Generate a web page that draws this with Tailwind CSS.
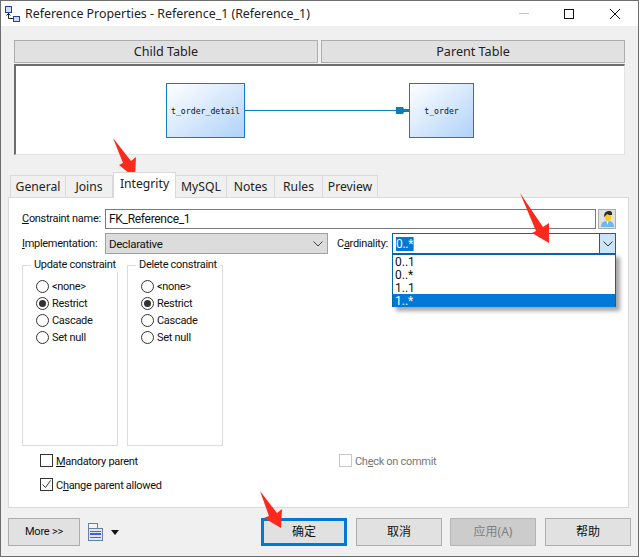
<!DOCTYPE html>
<html lang="en">
<head>
    <meta charset="UTF-8">
    <title>Reference Properties</title>
    <script src="https://cdn.jsdelivr.net/npm/@tailwindcss/browser@4"></script>
</head>
<body class="bg-white overflow-hidden">
<div class="relative w-[639px] h-[558px] bg-white text-[12px] leading-[14px] text-[#111] font-['Noto_Sans','Noto_Sans_CJK_SC',sans-serif]">
    <!-- Dialog window -->
    <div class="w-[639px] h-[557px] border border-[#6e6e6e] bg-[#f0f0f0] flex flex-col">
        <!-- Title bar -->
        <div class="h-[25px] bg-white flex items-center shrink-0">
            <svg class="ml-[3px] w-[17px] h-[17px]" viewBox="0 0 17 17" fill="none">
                <rect x="1.5" y="1.5" width="6" height="6" fill="#cfe0ff" stroke="#1f3fb5"/>
                <rect x="9.5" y="11.5" width="6" height="5" fill="#cfe0ff" stroke="#1f3fb5"/>
                <path d="M4.5 8v5.5H9.5M2.5 10.5l2-2 2 2" stroke="#222"/>
            </svg>
            <span class="ml-[4px] text-[12.4px] text-[#222]">Reference Properties - Reference_1 (Reference_1)</span>
            <div class="ml-auto flex items-center">
                <div class="w-[10px] h-px bg-[#c4c4c4]"></div>
                <div class="ml-[35px] w-[10px] h-[10px] border border-[#111]"></div>
                <svg class="ml-[36px] mr-[18px] w-[10px] h-[10px]" viewBox="0 0 10 10" stroke="#111"><path d="M0 0l10 10M10 0L0 10"/></svg>
            </div>
        </div>

        <!-- Table headers -->
        <div class="mt-[14px] ml-[13px] flex gap-[3px] shrink-0 text-[12.6px]">
            <div class="w-[304px] h-[23px] bg-[#e1e1e1] border border-[#adadad] flex items-center justify-center text-[#222]">Child Table</div>
            <div class="w-[304px] h-[23px] bg-[#e1e1e1] border border-[#adadad] flex items-center justify-center text-[#222]">Parent Table</div>
        </div>

        <!-- Diagram -->
        <div class="relative mt-px ml-[13px] w-[611px] h-[91px] bg-white border-t-2 border-l-2 border-r border-b border-t-[#6d6d6d] border-l-[#6d6d6d] border-r-[#e3e3e3] border-b-[#e3e3e3] shrink-0">
            <div class="absolute left-[150px] top-[17px] w-[79px] h-[55px] border border-[#0f7fbf] bg-linear-to-br from-white to-[#b0d2f8] flex items-center justify-center font-['DejaVu_Sans_Mono',monospace] text-[8.2px] text-[#111]">t_order_detail</div>
            <div class="absolute left-[393px] top-[17px] w-[65px] h-[55px] border border-[#0f7fbf] bg-linear-to-br from-white to-[#b0d2f8] flex items-center justify-center font-['DejaVu_Sans_Mono',monospace] text-[8.2px] text-[#111]">t_order</div>
            <svg class="absolute left-[229px] top-[37px] w-[164px] h-[14px]" viewBox="0 0 164 14" fill="#0a7dbd">
                <rect x="0" y="7" width="164" height="1"/>
                <polygon points="151,4 158,4 159,6 164,6 164,9 159,9 158,11 151,11"/>
            </svg>
        </div>

        <!-- Tabs -->
        <div class="mt-[17px] ml-[9px] h-[26px] flex items-end relative z-10 -mb-px shrink-0 text-[#222] text-[12.2px]">
            <div class="w-[56px] h-[23px] bg-[#f0f0f0] border border-[#d9d9d9] flex items-center justify-center">General</div>
            <div class="w-[47px] h-[23px] bg-[#f0f0f0] border border-l-0 border-[#d9d9d9] flex items-center justify-center">Joins</div>
            <div class="w-[63px] h-[26px] bg-white border border-b-0 border-[#d9d9d9] flex items-center justify-center pb-[3px]">Integrity</div>
            <div class="w-[51px] h-[23px] bg-[#f0f0f0] border border-l-0 border-[#d9d9d9] flex items-center justify-center">MySQL</div>
            <div class="w-[48px] h-[23px] bg-[#f0f0f0] border border-l-0 border-[#d9d9d9] flex items-center justify-center">Notes</div>
            <div class="w-[48px] h-[23px] bg-[#f0f0f0] border border-l-0 border-[#d9d9d9] flex items-center justify-center">Rules</div>
            <div class="w-[55px] h-[23px] bg-[#f0f0f0] border border-l-0 border-[#d9d9d9] flex items-center justify-center">Preview</div>
        </div>

        <!-- Integrity page -->
        <div class="ml-[7px] w-[621px] h-[311px] bg-white border border-[#d9d9d9] pt-[11px] pl-[13px] shrink-0 font-['Roboto',sans-serif] text-[11px] tracking-[-0.3px]">
            <div class="flex items-center h-[20px]">
                <label class="w-[83px] shrink-0 whitespace-nowrap"><u>C</u>onstraint name:</label>
                <div class="w-[491px] h-[20px] border border-[#7a7a7a] pl-[3px] flex items-center text-[12px]">FK_Reference_1</div>
                <div class="ml-[2px] w-[18px] h-[20px] bg-[#e1e1e1] border border-[#adadad] flex items-center justify-center">
                    <svg class="w-[15px] h-[16px]" viewBox="0 0 15 16">
                        <path d="M1 16c0-5 3-6 6.500-6s6.500 1 6.500 6z" fill="#6fb6ec"/>
                        <path d="M6.500 10l1 4 1-4z" fill="#fff"/>
                        <ellipse cx="8" cy="6" rx="3.200" ry="4" fill="#f5cf1f"/>
                        <path d="M4 6c0-4 2-6 5-6s3.500 2 3 4c-2 0-4 0-5-1-1 1-1.500 2-3 3z" fill="#2b2b2b"/>
                    </svg>
                </div>
            </div>
            <div class="mt-[4px] flex items-center h-[21px]">
                <label class="w-[83px] shrink-0 whitespace-nowrap"><u>I</u>mplementation:</label>
                <div class="w-[223px] h-[21px] bg-[#dcdcdc] border border-[#a0a0a0] pl-[3px] pr-[4px] flex items-center justify-between text-[11.5px]">
                    Declarative
                    <svg class="w-[10px] h-[6px]" viewBox="0 0 10 6" fill="none" stroke="#444"><path d="M.5.500L5 5 9.500.500"/></svg>
                </div>
                <label class="ml-[9px] w-[55px] shrink-0 whitespace-nowrap">C<u>a</u>rdinality:</label>
                <div class="w-[224px] h-[21px] border border-[#0a64a8] pl-[3px] flex items-center justify-between text-[12px]">
                    <span class="bg-[#0078d7] text-white h-[14px] leading-[14px] border-r border-[#e8862a]">0..*</span>
                    <div class="w-[16px] h-full bg-[#cce4f7] border-l border-[#0a64a8] flex items-center justify-center">
                        <svg class="w-[10px] h-[6px]" viewBox="0 0 10 6" fill="none" stroke="#333"><path d="M.5.500L5 5 9.500.500"/></svg>
                    </div>
                </div>
            </div>

            <!-- Constraint groups -->
            <div class="mt-[4px] flex gap-[9px]">
                <fieldset class="w-[96px] min-w-0 h-[188px] border border-[#dcdcdc] pl-[13px]">
                    <legend class="ml-[-5px] px-[3px] whitespace-nowrap">Update constraint</legend>
                    <div class="mt-[8px] flex flex-col gap-[4px]">
                        <div class="flex items-center gap-[3px] h-[13px]"><div class="w-[13px] h-[13px] rounded-full border border-[#333]"></div>&lt;none&gt;</div>
                        <div class="flex items-center gap-[3px] h-[13px]"><div class="w-[13px] h-[13px] rounded-full border border-[#333] flex items-center justify-center"><div class="w-[7px] h-[7px] rounded-full bg-[#333]"></div></div>Restrict</div>
                        <div class="flex items-center gap-[3px] h-[13px]"><div class="w-[13px] h-[13px] rounded-full border border-[#333]"></div>Cascade</div>
                        <div class="flex items-center gap-[3px] h-[13px]"><div class="w-[13px] h-[13px] rounded-full border border-[#333]"></div>Set null</div>
                    </div>
                </fieldset>
                <fieldset class="w-[96px] min-w-0 h-[188px] border border-[#dcdcdc] pl-[13px]">
                    <legend class="ml-[-5px] px-[3px] whitespace-nowrap">Delete constraint</legend>
                    <div class="mt-[8px] flex flex-col gap-[4px]">
                        <div class="flex items-center gap-[3px] h-[13px]"><div class="w-[13px] h-[13px] rounded-full border border-[#333]"></div>&lt;none&gt;</div>
                        <div class="flex items-center gap-[3px] h-[13px]"><div class="w-[13px] h-[13px] rounded-full border border-[#333] flex items-center justify-center"><div class="w-[7px] h-[7px] rounded-full bg-[#333]"></div></div>Restrict</div>
                        <div class="flex items-center gap-[3px] h-[13px]"><div class="w-[13px] h-[13px] rounded-full border border-[#333]"></div>Cascade</div>
                        <div class="flex items-center gap-[3px] h-[13px]"><div class="w-[13px] h-[13px] rounded-full border border-[#333]"></div>Set null</div>
                    </div>
                </fieldset>
            </div>

            <!-- Checkboxes -->
            <div class="mt-[8px] ml-[18px] flex items-center h-[13px]">
                <div class="w-[13px] h-[13px] border border-[#333]"></div>
                <span class="ml-[3px] mt-[2px] w-[283px]"><u>M</u>andatory parent</span>
                <div class="w-[13px] h-[13px] border border-[#c8c8c8]"></div>
                <span class="ml-[3px] mt-[2px] text-[#777]">Ch<u>e</u>ck on commit</span>
            </div>
            <div class="mt-[11px] ml-[18px] flex items-center h-[13px]">
                <div class="w-[13px] h-[13px] border border-[#333] flex items-center justify-center">
                    <svg class="w-[11px] h-[11px]" viewBox="0 0 11 11" fill="none" stroke="#333"><path d="M1.500 5.500l3 3 5-7"/></svg>
                </div>
                <span class="ml-[3px] mt-[2px]">C<u>h</u>ange parent allowed</span>
            </div>
        </div>

        <!-- Bottom buttons -->
        <div class="mt-[10px] ml-[7px] flex items-center h-[28px] shrink-0">
            <div class="w-[72px] h-[28px] bg-[#e1e1e1] border border-[#adadad] flex items-center justify-center font-['Roboto',sans-serif] text-[11px] tracking-[-0.2px]">More &gt;&gt;</div>
            <svg class="ml-[8px] w-[15px] h-[18px]" viewBox="0 0 15 18">
                <rect x=".5" y=".5" width="9" height="5" fill="#f4f4f4" stroke="#6a7fa8"/>
                <rect x=".5" y="5.500" width="14" height="12" fill="#dfe6f7" stroke="#6a7fa8"/>
                <rect x="2" y="8" width="11" height="1" fill="#5a6a8a"/>
                <rect x="2" y="10" width="11" height="2" fill="#3b5fe0"/>
                <rect x="2" y="14" width="11" height="1" fill="#5a6a8a"/>
            </svg>
            <svg class="ml-[8px] w-[8px] h-[5px]" viewBox="0 0 8 5" fill="#111"><path d="M0 0h8L4 5z"/></svg>
            <div class="ml-[142px] w-[86px] h-[28px] bg-[#e1e1e1] border-[3px] border-[#0078d7] flex items-center justify-center">确定</div>
            <div class="ml-[9px] w-[86px] h-[28px] bg-[#e1e1e1] border border-[#adadad] flex items-center justify-center">取消</div>
            <div class="ml-[8px] w-[86px] h-[28px] bg-[#cccccc] border border-[#b5b5b5] flex items-center justify-center text-[#7f7f7f]">应用(A)</div>
            <div class="ml-[9px] w-[86px] h-[28px] bg-[#e1e1e1] border border-[#adadad] flex items-center justify-center">帮助</div>
        </div>
    </div>

    <!-- Open cardinality list -->
    <div class="absolute left-[392px] top-[253px] w-[224px] h-[54px] bg-white border-t-2 border-x border-[#0a64a8] shadow-[4px_4px_4px_rgba(0,0,0,0.35)] flex flex-col font-['Roboto',sans-serif]">
        <div class="h-[13px] pl-[2px] leading-[15px]">0..1</div>
        <div class="h-[13px] pl-[2px] leading-[15px]">0..*</div>
        <div class="h-[13px] pl-[2px] leading-[15px]">1..1</div>
        <div class="h-[13px] pl-[2px] leading-[15px] bg-[#0078d7] text-white">1..*</div>
    </div>

    <!-- Red annotation arrows -->
    <svg class="absolute left-0 top-0 w-[639px] h-[558px] pointer-events-none" viewBox="0 0 639 558" fill="#fb2a1c">
        <polygon points="113,138 131,161 136,157 135,178 119,165 123,163"/>
        <polygon points="520,193 543,227 549,223 549,243 532,233 536,231"/>
        <polygon points="260,491 277,513 282,509 281,528 264,518 269,516"/>
    </svg>
</div>
</body>
</html>
